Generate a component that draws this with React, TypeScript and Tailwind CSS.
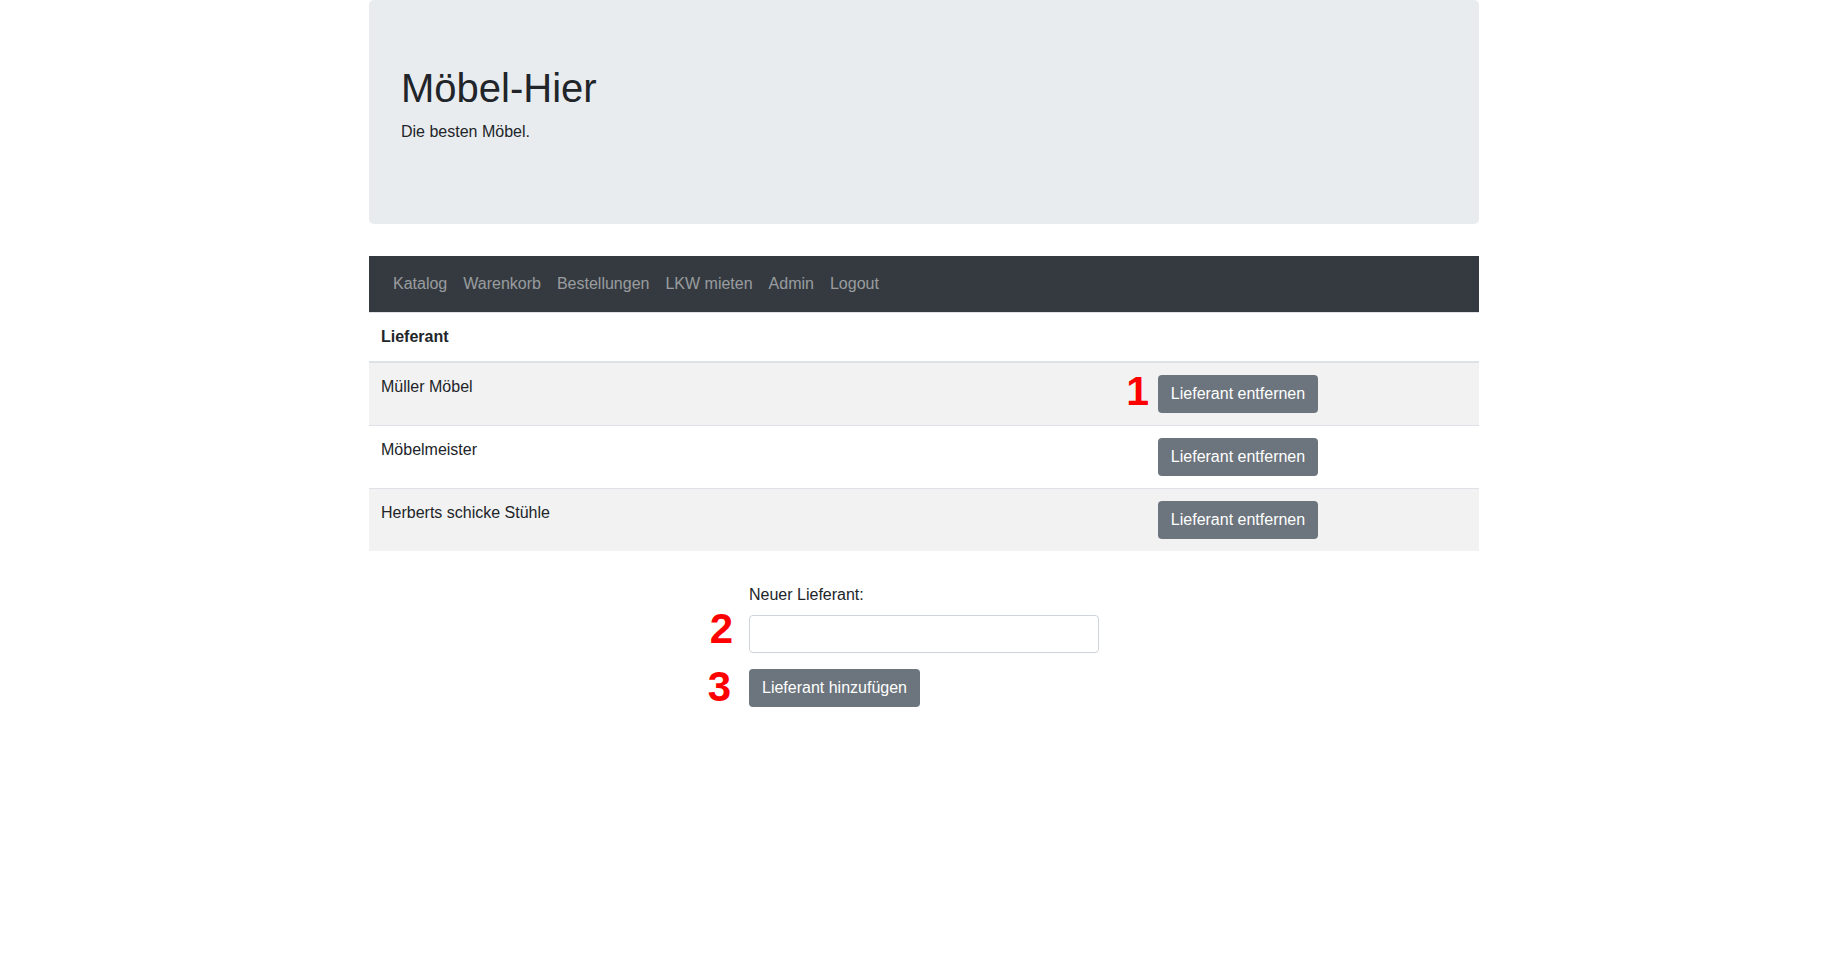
import React from "react";

const suppliers = ["Müller Möbel", "Möbelmeister", "Herberts schicke Stühle"];
const navItems = ["Katalog", "Warenkorb", "Bestellungen", "LKW mieten", "Admin", "Logout"];

function Marker({ n, className }: { n: string; className: string }) {
  return (
    <span
      className={
        "pointer-events-none absolute right-full font-bold leading-none text-[#ff0000] " +
        className
      }
    >
      {n}
    </span>
  );
}

export default function App() {
  return (
    <div className="min-h-screen bg-white font-['Liberation_Sans',Arial,sans-serif] text-base leading-6 text-[#212529]">
      <div className="mx-auto w-[1140px] px-[15px]">
        <div className="mb-8 rounded-[4.8px] bg-[#e9ecef] px-8 py-16">
          <h1 className="mb-2 text-[40px] leading-[48px] font-normal">Möbel-Hier</h1>
          <p className="mb-4">Die besten Möbel.</p>
        </div>

        <nav className="flex h-14 items-center bg-[#343a40] px-4 py-2">
          {navItems.map((item) => (
            <a key={item} href="#" className="px-2 py-2 text-white/50">
              {item}
            </a>
          ))}
        </nav>

        <div className="w-full">
          <div className="grid grid-cols-[777px_1fr] border-t border-b-2 border-[#dee2e6]">
            <div className="p-3 font-bold">Lieferant</div>
            <div className="p-3"></div>
          </div>
          {suppliers.map((s, i) => (
            <div
              key={s}
              className={
                "grid grid-cols-[777px_1fr] " +
                (i > 0 ? "border-t border-[#dee2e6] " : "") +
                (i % 2 === 0 ? "bg-[#f2f2f2]" : "bg-white")
              }
            >
              <div className="p-3">{s}</div>
              <div className="p-3">
                <div className="relative inline-block">
                  {i === 0 && <Marker n="1" className="top-[-4px] mr-[9px] text-[41px]" />}
                  <button className="h-[38px] w-[160px] rounded-[4px] bg-[#6c757d] text-center text-white">
                    Lieferant entfernen
                  </button>
                </div>
              </div>
            </div>
          ))}
        </div>

        <form className="mx-auto mt-8 w-[350px]" onSubmit={(e) => e.preventDefault()}>
          <div className="mb-4">
            <label className="mb-2 block">Neuer Lieferant:</label>
            <div className="relative">
              <Marker n="2" className="top-[-7px] mr-[16px] text-[42px]" />
              <input
                type="text"
                className="block h-[38px] w-full rounded-[4px] border border-[#ced4da] bg-white px-3 outline-none"
              />
            </div>
          </div>
          <div className="relative inline-block">
            <Marker n="3" className="top-[-3px] mr-[18px] text-[42px]" />
            <button className="h-[38px] w-[171px] rounded-[4px] bg-[#6c757d] text-center text-white">
              Lieferant hinzufügen
            </button>
          </div>
        </form>
      </div>
    </div>
  );
}
